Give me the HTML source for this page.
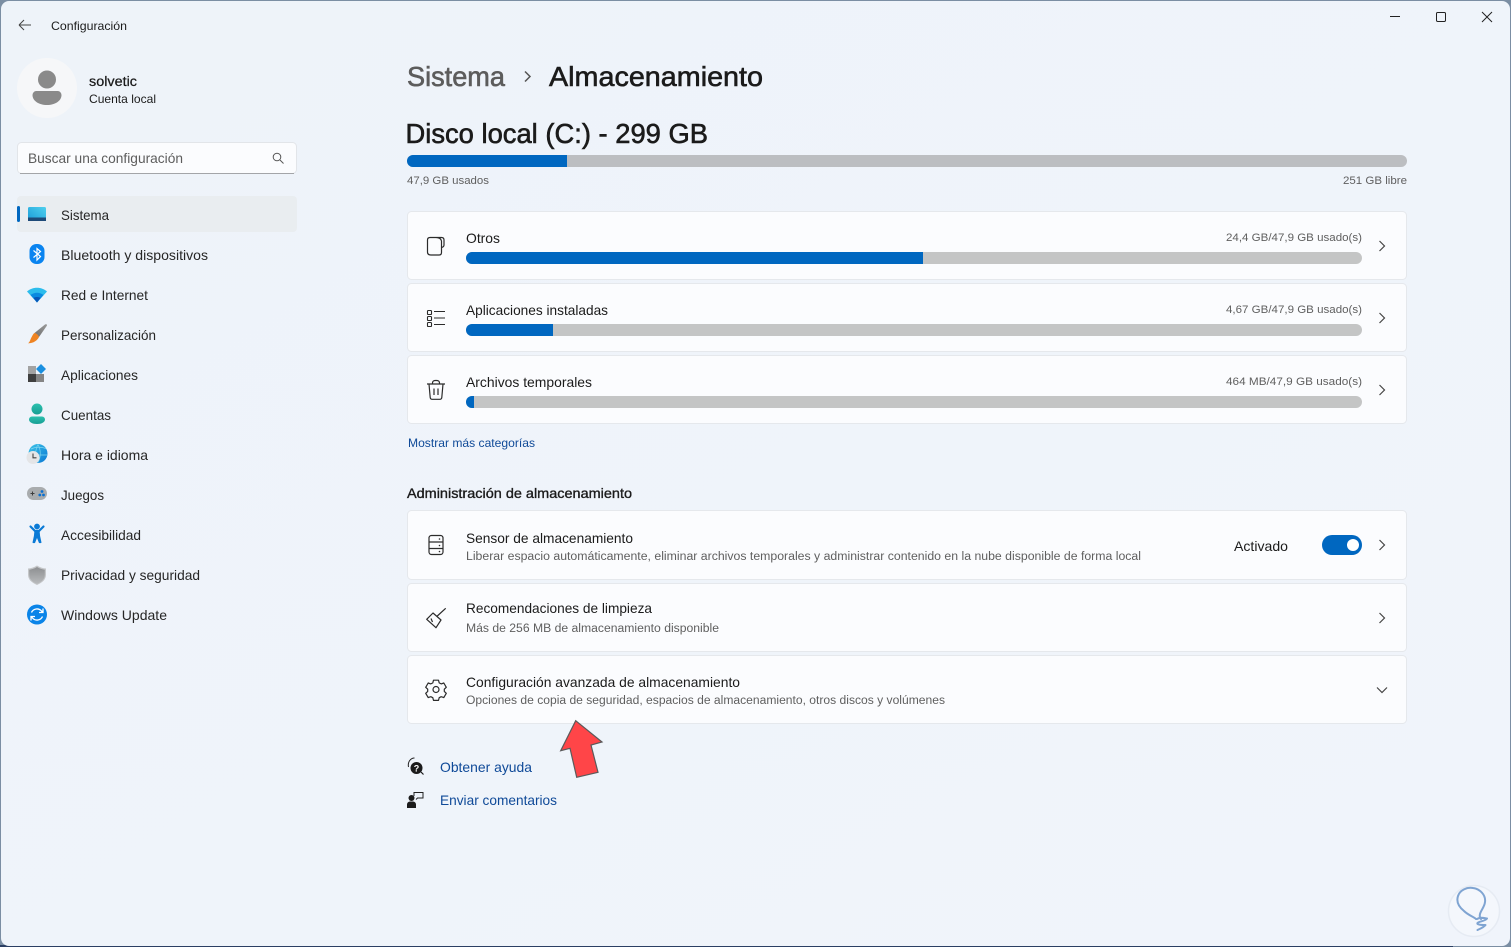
<!DOCTYPE html>
<html lang="es">
<head>
<meta charset="utf-8">
<title>Configuración</title>
<style>
html,body{margin:0;padding:0;width:1511px;height:947px;overflow:hidden;background:#7b8ea3}
svg{display:block}
text{font-family:"Liberation Sans",sans-serif;fill:#1b1b1b;font-size:14px}
.n{font-size:14px;fill:#262626}
.s{font-size:11.5px;fill:#5f5f5f}
.l{fill:#0f4a98}
.sb{stroke:#1b1b1b;stroke-width:.3px}
.h{font-size:28px}
</style>
</head>
<body>
<svg width="1511" height="947" viewBox="0 0 1511 947" xmlns="http://www.w3.org/2000/svg">
<defs>
<linearGradient id="bg" x1="0" y1="0" x2="1" y2="1"><stop offset="0" stop-color="#eef3f9"/><stop offset="1" stop-color="#f0f4fb"/></linearGradient>
<linearGradient id="sys" x1="0" y1="1" x2="1" y2="0"><stop offset="0" stop-color="#1a9bd8"/><stop offset="1" stop-color="#4fd0ee"/></linearGradient>
<linearGradient id="brush" x1="1" y1="0" x2="0" y2="1"><stop offset="0" stop-color="#9a9a9a"/><stop offset="1" stop-color="#6f6f6f"/></linearGradient>
<linearGradient id="teal" x1="0" y1="0" x2="0" y2="1"><stop offset="0" stop-color="#2cc0ae"/><stop offset="1" stop-color="#179e94"/></linearGradient>
<linearGradient id="globe" x1="0" y1="0" x2="1" y2="1"><stop offset="0" stop-color="#3cc4e8"/><stop offset="1" stop-color="#0a78d4"/></linearGradient>
<linearGradient id="shield" x1="0" y1="0" x2="0" y2="1"><stop offset="0" stop-color="#8d8f91"/><stop offset="1" stop-color="#b9bbbd"/></linearGradient>
</defs>

<!-- outer frame and window -->
<rect width="1511" height="947" fill="#7b8ea3"/>
<rect x="0" y="945" width="1453" height="2" fill="#2b3f63"/>
<rect x="1" y="1" width="1509" height="945" rx="8" fill="url(#bg)"/>

<!-- title bar -->
<path d="M19 25H31M19 25l5-5M19 25l5 5" fill="none" stroke="#444" stroke-width="1"/>
<text x="51" y="30" style="font-size:12px" textLength="76" lengthAdjust="spacingAndGlyphs">Configuración</text>
<path d="M1390 16.500h10" stroke="#222" stroke-width="1"/>
<rect x="1436.500" y="12.500" width="9" height="9" rx="1.200" fill="none" stroke="#222" stroke-width="1"/>
<path d="M1482 12l10 10M1492 12l-10 10" stroke="#222" stroke-width="1"/>

<!-- user -->
<circle cx="47" cy="88" r="30" fill="#f6f7f9"/>
<circle cx="47" cy="79.500" r="9" fill="#8a8a8a"/>
<path d="M36 91h22a4 4 0 0 1 3.500 4c0 6-6.500 10-14.500 10s-14.500-4-14.500-10a4 4 0 0 1 3.500-4z" fill="#8a8a8a"/>
<text x="89" y="86" class="sb" style="font-size:13.500px;stroke-width:.25px" textLength="48" lengthAdjust="spacingAndGlyphs">solvetic</text>
<text x="89" y="103" style="font-size:12px" textLength="67" lengthAdjust="spacingAndGlyphs">Cuenta local</text>

<!-- search -->
<rect x="17.500" y="142.500" width="279" height="31" rx="4" fill="#fbfcfe" stroke="#e2e5e9"/>
<path d="M20 173.500h274" stroke="#a3a5a8" stroke-width="1"/>
<text x="28" y="163" style="font-size:14px;fill:#5d5d5d" textLength="155" lengthAdjust="spacingAndGlyphs">Buscar una configuración</text>
<circle cx="277" cy="157" r="3.800" fill="none" stroke="#555" stroke-width="1"/>
<path d="M280 160l3.500 3.500" stroke="#555" stroke-width="1"/>

<!-- nav -->
<rect x="17" y="196" width="280" height="36" rx="4" fill="#e9edf0"/>
<rect x="17" y="206" width="3" height="16" rx="1.500" fill="#0067c0"/>

<rect x="28" y="207" width="18" height="14" rx="1.500" fill="url(#sys)"/>
<rect x="28" y="217.500" width="18" height="3.500" fill="#1d4a78"/>
<text x="61" y="220" class="n" textLength="48" lengthAdjust="spacingAndGlyphs">Sistema</text>

<rect x="29.500" y="244" width="15" height="20" rx="7" fill="#0a84f0"/>
<path d="M33.500 250.500l7 6-3.500 3.500v-11.500l3.500 3-7 6" fill="none" stroke="#fff" stroke-width="1.200"/>
<text x="61" y="260" class="n" textLength="147" lengthAdjust="spacingAndGlyphs">Bluetooth y dispositivos</text>

<path d="M27 291.500c5.500-5 14.500-5 20 0l-10 11z" fill="#2cbcec"/>
<path d="M30.500 295c4-3 9-3 13 0l-6.500 7.500z" fill="#0a8ae0"/>
<path d="M33.500 298c2-1.300 5-1.300 7 0l-3.500 4.500z" fill="#0656b8"/>
<text x="61" y="300" class="n" textLength="87" lengthAdjust="spacingAndGlyphs">Red e Internet</text>

<path d="M34.500 333L45 324.500q2-1 2 1L39 337z" fill="url(#brush)"/>
<path d="M34.500 333c2 .3 4 2 4.500 4-1.500 3.500-6 6.500-11 6.300 2-1.300 2.300-3.800 3.500-6 .8-1.500 2-3.800 3-4.300z" fill="#ee8322"/>
<text x="61" y="340" class="n" textLength="95" lengthAdjust="spacingAndGlyphs">Personalización</text>

<rect x="28" y="366" width="8" height="8" fill="#a2a2a2"/>
<rect x="28" y="374" width="8" height="8" fill="#3f3f3f"/>
<rect x="36" y="374" width="8" height="8" fill="#858585"/>
<path d="M41 364l5 5-5 5-5-5z" fill="#1a8fe0"/>
<text x="61" y="380" class="n" textLength="77" lengthAdjust="spacingAndGlyphs">Aplicaciones</text>

<circle cx="37" cy="409" r="5.500" fill="url(#teal)"/>
<path d="M32 416.500h10a3 3 0 0 1 3 3c0 2.800-3.500 4.500-8 4.500s-8-1.700-8-4.500a3 3 0 0 1 3-3z" fill="url(#teal)"/>
<text x="61" y="420" class="n" textLength="50" lengthAdjust="spacingAndGlyphs">Cuentas</text>

<circle cx="38" cy="453.500" r="9.500" fill="url(#globe)"/>
<path d="M31 449c4-2 10-2.500 15-.5M30 455h17M38 444.500c-3 5-3 13 0 18M38 444.500c3 5 3 13 0 18" fill="none" stroke="#7fd6f0" stroke-width=".7"/>
<circle cx="33" cy="457.500" r="6.500" fill="#e4e5e7"/>
<path d="M33 453.500v4.300h3.500" fill="none" stroke="#444" stroke-width="1.100"/>
<text x="61" y="460" class="n" textLength="87" lengthAdjust="spacingAndGlyphs">Hora e idioma</text>

<rect x="27" y="487" width="20" height="13" rx="6.500" fill="#a9acae"/>
<path d="M30.500 493.500h4M32.500 491.500v4" stroke="#3d3d3d" stroke-width="1"/>
<circle cx="42" cy="491.500" r="1.400" fill="#0a6fd0"/>
<circle cx="39.800" cy="495" r="1.400" fill="#0a6fd0"/>
<circle cx="43.500" cy="495" r="1.400" fill="#0a6fd0"/>
<text x="61" y="500" class="n" textLength="43" lengthAdjust="spacingAndGlyphs">Juegos</text>

<circle cx="37" cy="526.500" r="2.900" fill="#0a7ad6"/>
<path d="M30.500 526.500L35 531h4l4.500-4.500" fill="none" stroke="#0a7ad6" stroke-width="2.200" stroke-linecap="round" stroke-linejoin="round"/>
<path d="M34.500 530h5l.6 6 1.400 6.500q-.2 1-2.500.5L37 538l-2 5q-2.300.5-2.500-.5l1.400-6.500z" fill="#0a7ad6"/>
<text x="61" y="540" class="n" textLength="80" lengthAdjust="spacingAndGlyphs">Accesibilidad</text>

<path d="M37 565.500c3 2 6 2.800 9 3v6c0 5-3.500 8-9 10.500-5.500-2.500-9-5.500-9-10.500v-6c3-.2 6-1 9-3z" fill="#c4c6c8"/>
<path d="M37 567c2.800 1.700 5.500 2.500 7.800 2.700v5c0 4.300-3 7-7.800 9.200-4.800-2.200-7.800-4.900-7.800-9.200v-5c2.300-.2 5-1 7.800-2.700z" fill="url(#shield)"/>
<text x="61" y="580" class="n" textLength="139" lengthAdjust="spacingAndGlyphs">Privacidad y seguridad</text>

<circle cx="37" cy="614.500" r="10" fill="#0a84e8"/>
<path d="M31.500 612.500a6 6 0 0 1 10-1.500l1.500 1.500M43 608.500v4h-4M42.500 616.500a6 6 0 0 1-10 1.500l-1.500-1.500M31 620.500v-4h4" fill="none" stroke="#fff" stroke-width="1.300"/>
<text x="61" y="620" class="n" textLength="106" lengthAdjust="spacingAndGlyphs">Windows Update</text>

<!-- heading -->
<text x="407" y="86" class="h" style="font-size:28px;fill:#5c5c5c;stroke:#5c5c5c;stroke-width:.6px" textLength="98" lengthAdjust="spacingAndGlyphs">Sistema</text>
<path d="M525 71.500l5 5-5 5" fill="none" stroke="#555" stroke-width="1.500"/>
<text x="549" y="86" class="h sb" style="font-size:28px;stroke-width:.6px" textLength="214" lengthAdjust="spacingAndGlyphs">Almacenamiento</text>
<text x="405.500" y="143" class="h sb" style="font-size:28px;stroke-width:.6px" textLength="302.500" lengthAdjust="spacingAndGlyphs">Disco local (C:) - 299 GB</text>

<!-- usage bar -->
<rect x="407" y="155" width="1000" height="12" rx="6" fill="#bcbec1"/>
<path d="M567 155H413a6 6 0 0 0 0 12H567z" fill="#0067c0"/>
<text x="407" y="184" class="s" style="font-size:11px" textLength="82" lengthAdjust="spacingAndGlyphs">47,9 GB usados</text>
<text x="1343" y="184" class="s" style="font-size:11px" textLength="64" lengthAdjust="spacingAndGlyphs">251 GB libre</text>

<!-- cards -->
<g fill="#fbfcfe" stroke="#e5e8ec">
<rect x="407.500" y="211.500" width="999" height="68" rx="4"/>
<rect x="407.500" y="283.500" width="999" height="68" rx="4"/>
<rect x="407.500" y="355.500" width="999" height="68" rx="4"/>
<rect x="407.500" y="510.500" width="999" height="69" rx="4"/>
<rect x="407.500" y="583.500" width="999" height="68" rx="4"/>
<rect x="407.500" y="655.500" width="999" height="68" rx="4"/>
</g>

<!-- Otros -->
<path d="M427.500 240c0-1.500 1-2.500 2.500-2.500h11.500c1.500 0 2.500 1 2.500 2.500v5c0 1.500-1 2.200-2.500 2.500v5c0 1.500-1 2.500-2.500 2.500h-8c-2.500 0-3.500-1.300-3.500-3zM436 237.500c3 0 5 1.200 5.500 3.500v6.500" fill="none" stroke="#2b2b2b" stroke-width="1.200"/>
<text x="466" y="243" class="n" style="fill:#1b1b1b" textLength="34" lengthAdjust="spacingAndGlyphs">Otros</text>
<text x="1226" y="241" class="s" style="font-size:11px" textLength="136" lengthAdjust="spacingAndGlyphs">24,4 GB/47,9 GB usado(s)</text>
<rect x="466" y="252" width="896" height="12" rx="6" fill="#c4c5c5"/>
<path d="M923 252H472a6 6 0 0 0 0 12H923z" fill="#0067c0"/>
<path d="M1379.500 241l5 5-5 5" fill="none" stroke="#444" stroke-width="1.200"/>

<!-- Apps -->
<g fill="none" stroke="#2b2b2b" stroke-width="1.100">
<rect x="427.500" y="310.500" width="4" height="4" rx=".8"/>
<rect x="427.500" y="316.500" width="4" height="4" rx=".8"/>
<rect x="427.500" y="322.500" width="4" height="4" rx=".8"/>
<path d="M434 311.500h11M434 318h11M434 324.500h11"/>
</g>
<text x="466" y="315" class="n" style="fill:#1b1b1b" textLength="142" lengthAdjust="spacingAndGlyphs">Aplicaciones instaladas</text>
<text x="1226" y="313" class="s" style="font-size:11px" textLength="136" lengthAdjust="spacingAndGlyphs">4,67 GB/47,9 GB usado(s)</text>
<rect x="466" y="324" width="896" height="12" rx="6" fill="#c4c5c5"/>
<path d="M553 324H472a6 6 0 0 0 0 12H553z" fill="#0067c0"/>
<path d="M1379.500 313l5 5-5 5" fill="none" stroke="#444" stroke-width="1.200"/>

<!-- Temp -->
<path d="M427 384h18M429 384l1.200 13.500a2 2 0 0 0 2 1.800h7.600a2 2 0 0 0 2-1.800L443 384M432.500 384v-1a2.500 2.500 0 0 1 2.500-2.500h2a2.500 2.500 0 0 1 2.500 2.500v1M434 388.500v6.500M438 388.500v6.500" fill="none" stroke="#2b2b2b" stroke-width="1.200"/>
<text x="466" y="387" class="n" style="fill:#1b1b1b" textLength="126" lengthAdjust="spacingAndGlyphs">Archivos temporales</text>
<text x="1226" y="385" class="s" style="font-size:11px" textLength="136" lengthAdjust="spacingAndGlyphs">464 MB/47,9 GB usado(s)</text>
<rect x="466" y="396" width="896" height="12" rx="6" fill="#c4c5c5"/>
<path d="M474 396H472a6 6 0 0 0 0 12H474z" fill="#0067c0"/>
<path d="M1379.500 385l5 5-5 5" fill="none" stroke="#444" stroke-width="1.200"/>

<text x="408" y="447" class="l" style="font-size:12px" textLength="127" lengthAdjust="spacingAndGlyphs">Mostrar más categorías</text>
<text x="407" y="498" class="sb" style="font-size:14px;stroke-width:.35px" textLength="225" lengthAdjust="spacingAndGlyphs">Administración de almacenamiento</text>

<!-- Sensor -->
<g fill="none" stroke="#2b2b2b" stroke-width="1.200">
<rect x="429" y="535.500" width="14" height="19" rx="2.500"/>
<path d="M429 542h14M429 548.500h14"/>
</g>
<circle cx="439.500" cy="539" r=".8" fill="#2b2b2b"/><circle cx="439.500" cy="545.500" r=".8" fill="#2b2b2b"/><circle cx="439.500" cy="551.500" r=".8" fill="#2b2b2b"/>
<text x="466" y="543" class="n" style="fill:#1b1b1b" textLength="167" lengthAdjust="spacingAndGlyphs">Sensor de almacenamiento</text>
<text x="466" y="560" class="s" textLength="675" lengthAdjust="spacingAndGlyphs">Liberar espacio automáticamente, eliminar archivos temporales y administrar contenido en la nube disponible de forma local</text>
<text x="1234" y="551" class="n" style="fill:#1b1b1b" textLength="54" lengthAdjust="spacingAndGlyphs">Activado</text>
<rect x="1322" y="535" width="40" height="20" rx="10" fill="#0067c0"/>
<circle cx="1353" cy="545" r="6" fill="#fff"/>
<path d="M1379.500 540l5 5-5 5" fill="none" stroke="#444" stroke-width="1.200"/>

<!-- Limpieza -->
<path d="M445.700 608.300l-8.400 7.700M433 613l8 7-5 7.700-9.300-8.400zM431 618.500l1.500 3.500" fill="none" stroke="#2b2b2b" stroke-width="1.200" stroke-linejoin="round"/>
<text x="466" y="613" class="n" style="fill:#1b1b1b" textLength="186" lengthAdjust="spacingAndGlyphs">Recomendaciones de limpieza</text>
<text x="466" y="632" class="s" textLength="253" lengthAdjust="spacingAndGlyphs">Más de 256 MB de almacenamiento disponible</text>
<path d="M1379.500 613l5 5-5 5" fill="none" stroke="#444" stroke-width="1.200"/>

<!-- Avanzada -->
<g transform="translate(0 -1)">
<path d="M433.500 681.200h5l.7 2.700 2 1 2.600-.9 2.500 4.300-2 1.900v2.200l2 1.900-2.500 4.300-2.600-.9-2 1-.7 2.700h-5l-.7-2.700-2-1-2.600.9-2.500-4.300 2-1.900v-2.200l-2-1.900 2.500-4.300 2.600.9 2-1z" fill="none" stroke="#2b2b2b" stroke-width="1.200" stroke-linejoin="round"/>
<circle cx="436" cy="690.500" r="3" fill="none" stroke="#2b2b2b" stroke-width="1.200"/>
</g>
<text x="466" y="687" class="n" style="fill:#1b1b1b" textLength="274" lengthAdjust="spacingAndGlyphs">Configuración avanzada de almacenamiento</text>
<text x="466" y="704" class="s" textLength="479" lengthAdjust="spacingAndGlyphs">Opciones de copia de seguridad, espacios de almacenamiento, otros discos y volúmenes</text>
<path d="M1377 687.500l5 5 5-5" fill="none" stroke="#444" stroke-width="1.200"/>

<!-- arrow -->
<path d="M575.700 720.700L602 742l-11 3 7 27.300-21.300 5-6.700-29-9.300 2.400z" fill="#ff4548" stroke="#5a5a5a" stroke-width="1.200"/>

<!-- links -->
<path d="M408.500 767c-1-5 2-9 6-9" fill="none" stroke="#222" stroke-width="1"/>
<circle cx="416.500" cy="768" r="6" fill="#1b1b1b"/>
<path d="M421 772l2.500 2.500" stroke="#1b1b1b" stroke-width="1.200"/>
<text x="416.500" y="771.500" text-anchor="middle" style="font-size:9px;fill:#fff;font-weight:bold">?</text>
<text x="440" y="772" class="l" style="font-size:14px" textLength="92" lengthAdjust="spacingAndGlyphs">Obtener ayuda</text>

<circle cx="411.500" cy="798" r="3" fill="#1b1b1b"/>
<path d="M407 808v-3.500a3 3 0 0 1 3-3h3a3 3 0 0 1 3 3v3.500z" fill="#1b1b1b"/>
<path d="M414 796v-3.500h9v5.500h-5.500l-1.500 1.500" fill="none" stroke="#222" stroke-width="1"/>
<text x="440" y="805" class="l" style="font-size:14px" textLength="117" lengthAdjust="spacingAndGlyphs">Enviar comentarios</text>

<!-- watermark -->
<circle cx="1474" cy="911" r="25.500" fill="#f4f7fc" stroke="#e6ebf3" stroke-width="1.500"/>
<path d="M1476 919c-2-2-8-4-12-8-5-4-8-9-6-15 2-6 9-9 15-8 7 1 13 7 12 14-.5 5-4 8-5 12-.5 2 0 4 1 5M1477 919c3-2 7-1 10-.5-2 3-8 2.500-9.500 4.500-1 2 5 2 8 2-2 2.500-5 3.500-8 5" fill="none" stroke="#7fa4d2" stroke-width="2" stroke-linecap="round" stroke-linejoin="round"/>
</svg>
</body>
</html>
